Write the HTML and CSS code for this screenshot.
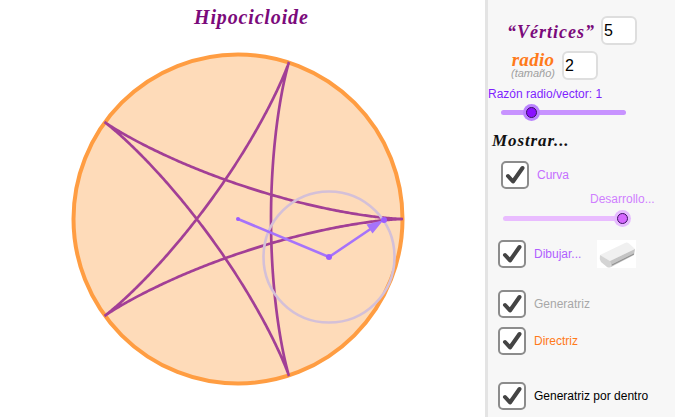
FILE: index.html
```html
<!DOCTYPE html>
<html lang="es">
<head>
<meta charset="utf-8">
<title>Hipocicloide</title>
<link rel="stylesheet" href="styles.css">
</head>
<body>
<main class="canvas">
  <svg class="plot" viewBox="0 0 485 417" width="485" height="417">
    <text class="title" x="194" y="24">Hipocicloide</text>
    <circle class="disc" cx="238" cy="219" r="164.5"/>
    <path id="curve" class="curve" d=""/>
    <circle class="roller" cx="329" cy="257" r="65.5"/>
    <path class="vec" d="M238 219 L329 257 L372 228"/>
    <path class="head" d="M383.500 220 L366.500 224.500 L372.500 233.500 Z"/>
    <circle class="pt" cx="238" cy="219" r="2"/>
    <circle class="pt" cx="329" cy="257" r="3"/>
    <circle class="pt" cx="384" cy="220" r="3"/>
  </svg>
</main>
<aside class="panel">
  <div class="field field-v">
    <span class="tex tex-v">“Vértices”</span>
    <input class="num" type="text" value="5" aria-label="Vértices">
  </div>
  <div class="field field-r">
    <span class="stack"><span class="tex tex-r">radio</span><span class="sub">(tamaño)</span></span>
    <input class="num" type="text" value="2" aria-label="radio">
  </div>
  <div class="lbl lbl-razon">Razón radio/vector: 1</div>
  <div class="slider slider-a"><span class="thumb thumb-a"></span></div>
  <div class="tex mostrar">Mostrar...</div>
  <label class="row row-curva">
    <span class="box"><svg viewBox="0 0 24 24"><path d="M5 13 L10 18.500 L19.500 5"/></svg></span>
    <span class="lbl c-curva">Curva</span>
  </label>
  <div class="lbl c-des">Desarrollo...</div>
  <div class="slider slider-b"><span class="thumb thumb-b"></span></div>
  <label class="row row-dib">
    <span class="box"><svg viewBox="0 0 24 24"><path d="M5 13 L10 18.500 L19.500 5"/></svg></span>
    <span class="lbl c-dib">Dibujar...</span>
    <span class="eraser">
      <svg viewBox="0 0 39 28" width="39" height="28">
        <path class="er-top" d="M3 15 L28 3 Q30 2 32 3.500 L38 9 L13 21 Z"/>
        <path class="er-side" d="M3 15 L13 21 L14 27 Q12 28 10 27 L4 22 Q2 19 3 15 Z"/>
        <path class="er-front" d="M13 21 L38 9 L37 15 L14 27 Z"/>
        <path class="er-line" d="M15 25 L37 14"/>
      </svg>
    </span>
  </label>
  <label class="row row-gen">
    <span class="box"><svg viewBox="0 0 24 24"><path d="M5 13 L10 18.500 L19.500 5"/></svg></span>
    <span class="lbl c-gen">Generatriz</span>
  </label>
  <label class="row row-dir">
    <span class="box"><svg viewBox="0 0 24 24"><path d="M5 13 L10 18.500 L19.500 5"/></svg></span>
    <span class="lbl c-dir">Directriz</span>
  </label>
  <label class="row row-den">
    <span class="box"><svg viewBox="0 0 24 24"><path d="M5 13 L10 18.500 L19.500 5"/></svg></span>
    <span class="lbl c-den">Generatriz por dentro</span>
  </label>
</aside>
<script src="curve.js"></script>
</body>
</html>
```
FILE: styles.css
```css
* { box-sizing: border-box; }
html, body { margin: 0; height: 100%; overflow: hidden; }
body { display: flex; width: 675px; height: 417px; background: #fff; font-family: "Liberation Sans", Arial, sans-serif; }

.canvas { width: 485px; height: 417px; flex: none; }
.plot { display: block; }
.title { font-family: "Liberation Serif", serif; font-style: italic; font-weight: bold; font-size: 20px; letter-spacing: 0.85px; fill: #7b0a7b; }
.disc { fill: #fedbb9; stroke: #ff9d42; stroke-width: 4; }
.curve { fill: none; stroke: #a23f96; stroke-width: 2.7; stroke-linejoin: miter; stroke-miterlimit: 20; }
.roller { fill: none; stroke: #d4c0d8; stroke-width: 2.6; }
.vec { fill: none; stroke: #a673fb; stroke-width: 2.6; }
.head { fill: #a673fb; }
.pt { fill: #9b5cff; }

.panel { width: 190px; height: 417px; flex: none; background: #f7f7f7; border-left: 3px solid #e4e4e4; overflow: hidden; }

.field { display: flex; align-items: center; height: 29px; }
.field-v { margin-top: 16px; padding-left: 19px; gap: 6px; }
.field-r { margin-top: 6px; padding-left: 21px; gap: 5px; }
.tex { font-family: "Liberation Serif", serif; font-style: italic; font-weight: bold; }
.tex-v { font-size: 18px; line-height: 30px; padding-top: 2px; letter-spacing: 1px; color: #7b0a7b; width: 88px; white-space: nowrap; }
.stack { display: flex; flex-direction: column; align-items: center; width: 48px; }
.tex-r { font-size: 19px; line-height: 15px; color: #ff7a1a; letter-spacing: .3px; }
.sub { font-size: 11px; line-height: 12px; font-style: italic; color: #a0a0a0; white-space: nowrap; }
.num { width: 36px; height: 29px; padding: 0 0 0 1px; border: 2px solid #dedede; border-radius: 6px; background: #fff; font: 16px "Liberation Sans", Arial, sans-serif; color: #000; outline: none; }

.lbl { font-size: 12px; line-height: 14px; white-space: nowrap; }
.lbl-razon { margin-top: 7px; color: #7f1fff; }
.slider { position: relative; width: 125px; height: 5px; border-radius: 3px; }
.slider-a { margin: 9px 0 0 13px; background: #c893ff; }
.slider-b { margin: 10px 0 0 15px; background: #e9bcff; }
.thumb { position: absolute; top: 50%; width: 11px; height: 11px; margin: -5.500px 0 0 -5.500px; border-radius: 50%; border: 1px solid #3a1060; }
.thumb-a { left: 30px; background: #8a10ff; box-shadow: 0 0 0 3px #ba82ff; }
.thumb-b { left: 119px; background: #d566ff; box-shadow: 0 0 0 3px #e6baff; }
.mostrar { margin-top: 16px; padding-left: 4px; height: 20px; line-height: 20px; font-size: 17px; letter-spacing: .9px; color: #111; }

.row { display: flex; align-items: center; gap: 8px; height: 28px; }
.box { width: 28px; height: 28px; flex: none; background: #fff; border: 2px solid #8c8c8c; border-radius: 5px; display: flex; }
.box svg { width: 24px; height: 24px; }
.box path { fill: none; stroke: #444; stroke-width: 4; stroke-linecap: round; stroke-linejoin: round; }
.row-curva { margin: 10px 0 0 13px; }
.c-curva { color: #c56fff; }
.c-des { margin: 3px 0 0 102px; color: #d07fff; }
.row-dib { margin: 19px 0 0 10px; }
.c-dib { color: #b05fff; width: 50px; }
.eraser { margin-left: 5px; width: 39px; height: 28px; background: #fff; display: block; }
.eraser svg { display: block; }
.er-top { fill: #f0f0f0; }
.er-side { fill: #d4d4d4; }
.er-front { fill: #c4c4c4; }
.er-line { fill: none; stroke: #8a8a8a; stroke-width: 1; }
.row-gen { margin: 22px 0 0 10px; }
.c-gen { color: #a8a8a8; }
.row-dir { margin: 9px 0 0 10px; }
.c-dir { color: #ff7a1a; }
.row-den { margin: 27px 0 0 10px; }
.c-den { color: #000; }
```
FILE: curve.js
```js
var cx = 238, cy = 219, R = 165, r = 66, d = "";
for (var i = 0; i <= 1000; i++) {
  var t = i / 1000 * 4 * Math.PI;
  var x = cx + (R - r) * Math.cos(t) + r * Math.cos((R - r) / r * t);
  var y = cy - ((R - r) * Math.sin(t) - r * Math.sin((R - r) / r * t));
  d += (i ? "L" : "M") + x.toFixed(2) + " " + y.toFixed(2);
}
document.getElementById("curve").setAttribute("d", d + "Z");
```
